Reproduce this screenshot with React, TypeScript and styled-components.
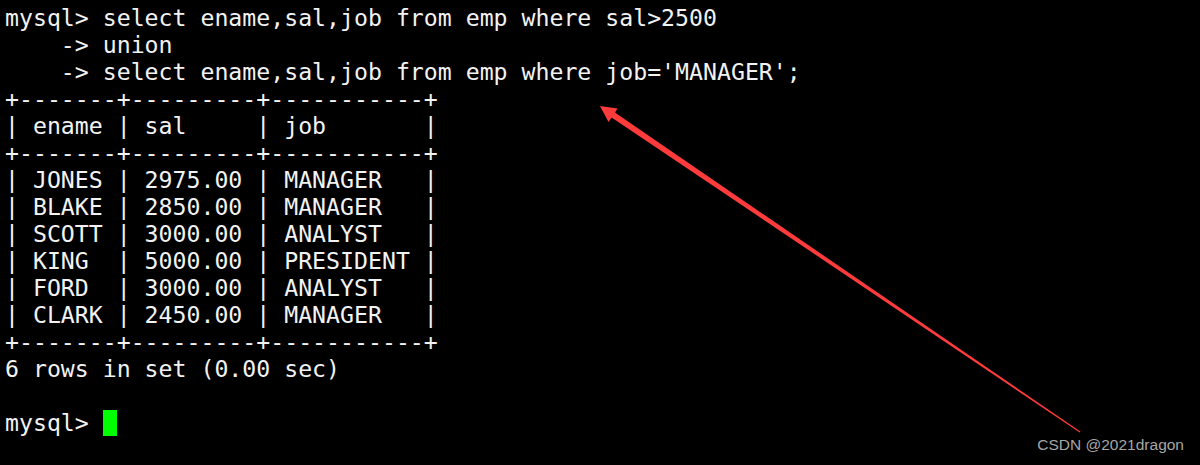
import React from "react";
import styled, { createGlobalStyle } from "styled-components";

const Global = createGlobalStyle`
  html, body { margin: 0; padding: 0; background: #000; }
  #root { width: 1200px; height: 465px; }
`;

const Screen = styled.div`
  position: relative;
  width: 1200px;
  height: 465px;
  background: #000;
  overflow: hidden;
`;

const Terminal = styled.pre`
  margin: 0;
  padding: 4px 0 0 5px;
  font-family: "DejaVu Sans Mono", "Liberation Mono", monospace;
  font-size: 23.2px;
  line-height: 27px;
  color: #f2f2f2;
  white-space: pre;
`;

const Line = styled.div`
  height: 27px;
`;

const Cursor = styled.span`
  display: inline-block;
  width: 14px;
  height: 26px;
  background: #00ff00;
  vertical-align: top;
  margin-top: 1px;
`;

const Overlay = styled.svg`
  position: absolute;
  left: 0;
  top: 0;
  pointer-events: none;
`;

const Watermark = styled.div`
  position: absolute;
  right: 16px;
  bottom: 11px;
  font-family: "Liberation Sans", Arial, sans-serif;
  font-size: 15.5px;
  color: #a6a6a6;
`;

const lines = [
  "mysql> select ename,sal,job from emp where sal>2500",
  "    -> union",
  "    -> select ename,sal,job from emp where job='MANAGER';",
  "+-------+---------+-----------+",
  "| ename | sal     | job       |",
  "+-------+---------+-----------+",
  "| JONES | 2975.00 | MANAGER   |",
  "| BLAKE | 2850.00 | MANAGER   |",
  "| SCOTT | 3000.00 | ANALYST   |",
  "| KING  | 5000.00 | PRESIDENT |",
  "| FORD  | 3000.00 | ANALYST   |",
  "| CLARK | 2450.00 | MANAGER   |",
  "+-------+---------+-----------+",
  "6 rows in set (0.00 sec)",
  "",
];

const Arrow: React.FC = () => {
  const tip = [600, 106];
  const tail = [1080, 432];
  const dx = tail[0] - tip[0];
  const dy = tail[1] - tip[1];
  const len = Math.hypot(dx, dy);
  const ux = dx / len;
  const uy = dy / len;
  const px = -uy;
  const py = ux;
  const neck = [tip[0] + ux * 12, tip[1] + uy * 12];
  const w0 = 3;
  const w1 = 0.6;
  const shaft = [
    [neck[0] + px * w0, neck[1] + py * w0],
    [tail[0] + px * w1, tail[1] + py * w1],
    [tail[0] - px * w1, tail[1] - py * w1],
    [neck[0] - px * w0, neck[1] - py * w0],
  ];
  const head = [
    [600, 106],
    [617.5, 108.5],
    [613.5, 115],
    [608.5, 122],
  ];
  const pts = (a: number[][]) => a.map((p) => p.join(",")).join(" ");
  return (
    <Overlay width={1200} height={465} viewBox="0 0 1200 465">
      <polygon points={pts(shaft)} fill="#ff3b3b" />
      <polygon points={pts(head)} fill="#ff3b3b" />
    </Overlay>
  );
};

export default function App() {
  return (
    <>
      <Global />
      <Screen>
        <Terminal>
          {lines.map((l, i) => (
            <Line key={i}>{l}</Line>
          ))}
          <Line>
            {"mysql> "}
            <Cursor />
          </Line>
        </Terminal>
        <Arrow />
        <Watermark>CSDN @2021dragon</Watermark>
      </Screen>
    </>
  );
}
